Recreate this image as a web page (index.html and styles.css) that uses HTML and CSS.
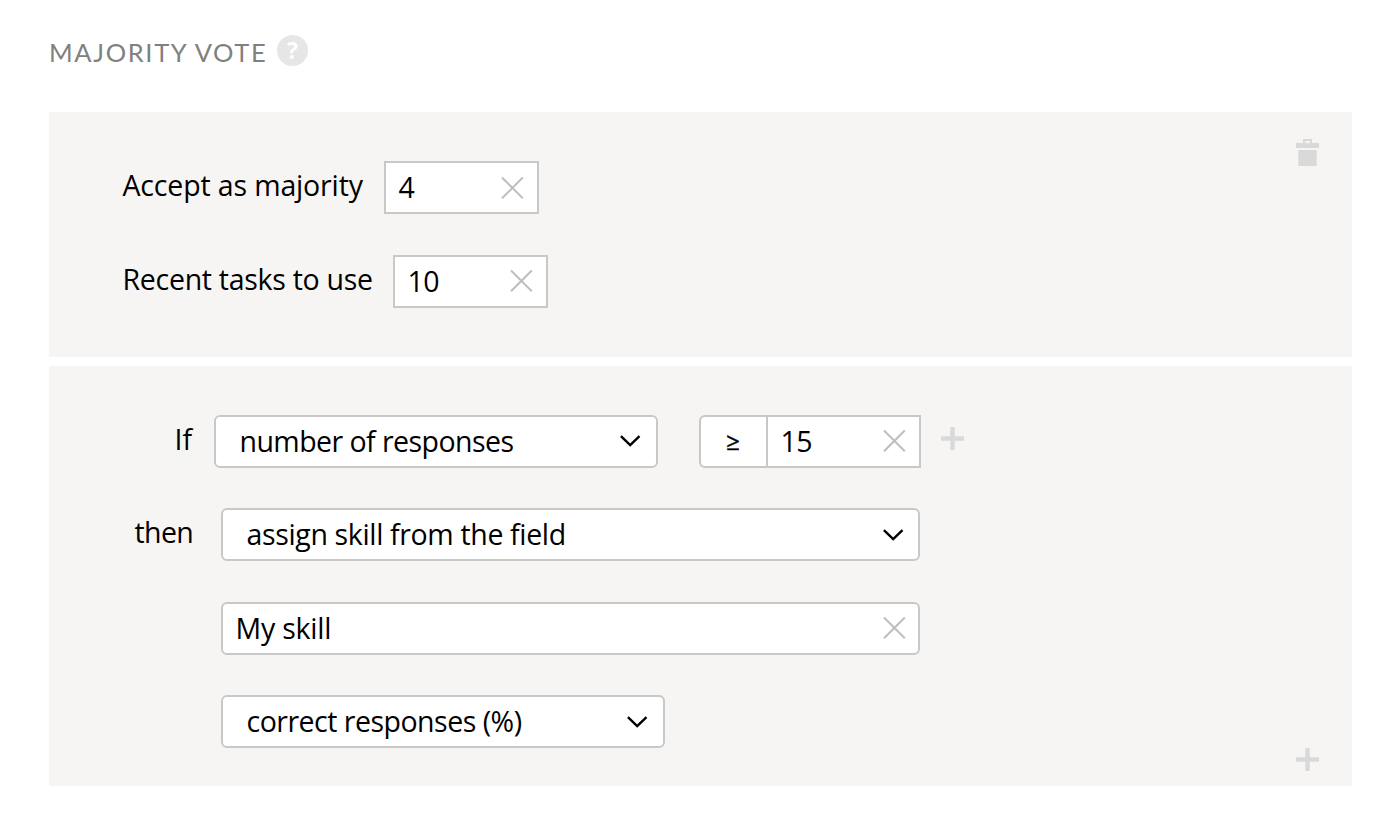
FILE: index.html
```html
<!DOCTYPE html>
<html lang="en">
<head>
<meta charset="utf-8">
<title>Majority vote</title>
<link rel="stylesheet" href="styles.css">
</head>
<body>
<svg class="symbols" aria-hidden="true">
  <symbol id="clear" viewBox="0 0 24 24"><path d="M2 1.5 22.8 22.3M22.8 1.5 2 22.3" fill="none" stroke="#bebebe" stroke-width="2"/></symbol>
  <symbol id="chevron" viewBox="0 0 22 14"><path d="M1.9 2.2 11.2 11.2 20.5 2.2" fill="none" stroke="#000" stroke-width="2.4"/></symbol>
  <symbol id="plus" viewBox="0 0 23 23"><path d="M9.3 0h4.4v9.3H23v4.4h-9.3V23H9.3v-9.3H0V9.3h9.3z" fill="#d9d9d9"/></symbol>
</svg>
<main class="page">
  <header class="heading">
    <h1 class="title">MAJORITY VOTE</h1>
    <span class="help">?</span>
  </header>
  <section class="panel settings">
    <svg class="trash" viewBox="0 0 23 28"><path fill-rule="evenodd" d="M7 0h9v4h7v5H0V4h7zM9.3 2v2.3h4.5V2zM2.3 11h18.4v16H2.3z" fill="#d9d9d9"/></svg>
    <div class="row">
      <span class="label accept">Accept as majority</span>
      <div class="field small square"><span class="value">4</span><svg class="clear"><use href="#clear"/></svg></div>
    </div>
    <div class="row">
      <span class="label recent">Recent tasks to use</span>
      <div class="field small square"><span class="value">10</span><svg class="clear"><use href="#clear"/></svg></div>
    </div>
  </section>
  <section class="panel rule">
    <div class="row">
      <span class="label if">If</span>
      <div class="field select medium"><span class="value responses">number of responses</span><svg class="chevron"><use href="#chevron"/></svg></div>
      <div class="comparison">
        <div class="field operator"><span class="sign">≥</span></div>
        <div class="field small square joined"><span class="value">15</span><svg class="clear"><use href="#clear"/></svg></div>
      </div>
      <svg class="plus add-condition"><use href="#plus"/></svg>
    </div>
    <div class="row">
      <span class="label then">then</span>
      <div class="field select wide"><span class="value assign">assign skill from the field</span><svg class="chevron"><use href="#chevron"/></svg></div>
    </div>
    <div class="row indented">
      <div class="field wide"><span class="value skill">My skill</span><svg class="clear"><use href="#clear"/></svg></div>
    </div>
    <div class="row indented">
      <div class="field select medium"><span class="value correct">correct responses (%)</span><svg class="chevron"><use href="#chevron"/></svg></div>
    </div>
    <svg class="plus add-rule"><use href="#plus"/></svg>
  </section>
</main>
</body>
</html>
```

FILE: styles.css
```css
* { box-sizing: border-box; }
body { margin: 0; background: #fff; color: #000; font: 28.5px/40px "Open Sans", "Noto Sans", sans-serif; }
.symbols { display: none; }
.page { display: flex; flex-direction: column; padding: 32px 48px 0 49px; }
.heading { display: flex; height: 80px; gap: 10px; }
.title { margin: 0; width: 218px; color: #808080; font-family: Lato, sans-serif; font-size: 25.5px; font-weight: 400; letter-spacing: 1.65px; white-space: nowrap; }
.help { width: 31px; height: 31px; margin-top: 3px; border-radius: 50%; background: #e6e6e6; color: #fff; font-size: 23px; font-weight: 700; line-height: 31px; text-align: center; }
.panel { position: relative; display: flex; flex-direction: column; gap: 40.5px; background: #f6f5f3; }
.settings { height: 244.5px; padding: 49px 0 0 73.5px; }
.rule { height: 420px; margin-top: 9px; padding: 49px 0 0 73.5px; }
.row { display: flex; height: 53px; }
.label { margin-top: 4px; white-space: nowrap; }
.accept { width: 261px; letter-spacing: -0.15px; }
.recent { width: 270px; letter-spacing: -0.28px; }
.if { width: 91px; padding-left: 52px; }
.then { width: 98px; padding-left: 12px; letter-spacing: -0.6px; }
.indented { padding-left: 98px; }
.field { display: flex; align-items: center; justify-content: space-between; height: 53px; padding: 0 12.5px 0 13px; border: 2px solid #c8c8c8; border-radius: 6px; background: #fff; white-space: nowrap; }
.value { padding-bottom: 1px; letter-spacing: -0.5px; }
.responses { letter-spacing: -0.55px; }
.assign { letter-spacing: -0.35px; }
.skill { letter-spacing: -0.2px; }
.small { width: 155px; }
.square { border-radius: 0; }
.select { padding: 0 14.5px 0 24px; }
.medium { width: 444px; }
.wide { width: 699.5px; }
.comparison { display: flex; margin-left: 41px; }
.operator { width: 67px; padding: 0; justify-content: center; border-right: 0; border-radius: 6px 0 0 6px; }
.sign { font-size: 24px; -webkit-text-stroke: 0.4px #000; }
.joined { width: 155px; }
.clear { width: 24px; height: 24px; }
.chevron { width: 22px; height: 14px; }
.plus { width: 23px; height: 23px; }
.add-condition { margin: 12px 0 0 20px; }
.add-rule { position: absolute; right: 33px; bottom: 15px; }
.trash { position: absolute; top: 27px; right: 33px; width: 23px; height: 28px; }
```
